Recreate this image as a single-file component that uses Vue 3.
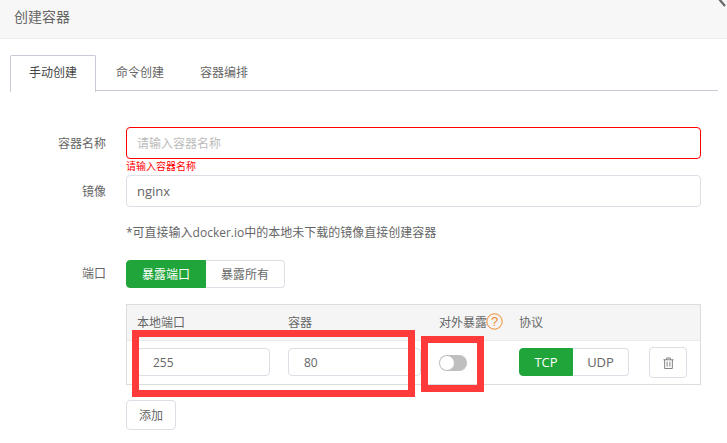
<script setup>
const tabs = ['手动创建', '命令创建', '容器编排']
const columns = ['本地端口', '容器', '对外暴露', '协议']
</script>

<template>
  <div class="page">
    <header class="head">
      <span>创建容器</span>
      <svg class="close" width="9" height="7" viewBox="0 0 9 7"><path d="M1 -1 L7 6" stroke="#666" stroke-width="2.2" fill="none" /></svg>
    </header>

    <nav class="tabs">
      <a v-for="(t, i) in tabs" :key="t" class="tab" :class="{ active: i === 0 }">{{ t }}</a>
    </nav>

    <form class="form" @submit.prevent>
      <div class="row">
        <label class="label">容器名称</label>
        <div class="field">
          <input class="input error" placeholder="请输入容器名称" />
          <div class="err">请输入容器名称</div>
        </div>
      </div>
      <div class="row">
        <label class="label">镜像</label>
        <div class="field"><input class="input" value="nginx" /></div>
      </div>
      <p class="hint">*可直接输入docker.io中的本地未下载的镜像直接创建容器</p>
      <div class="row port">
        <label class="label">端口</label>
        <div class="field">
          <div class="seg">
            <span class="seg-btn on">暴露端口</span>
            <span class="seg-btn wide">暴露所有</span>
          </div>
        </div>
      </div>

      <div class="table">
        <div class="grid thead">
          <span v-for="(c, i) in columns" :key="c" class="th">
            {{ c }}
            <svg v-if="i === 2" class="help" width="17" height="17" viewBox="0 0 17 17">
              <circle cx="8.5" cy="8.5" r="7.7" fill="none" stroke="#f0882b" stroke-width="1" />
              <text x="8.5" y="13" text-anchor="middle" font-size="13" fill="#f0882b" font-family="'Liberation Sans', sans-serif">?</text>
            </svg>
          </span>
        </div>
        <div class="grid tbody">
          <input class="cell-input" value="255" />
          <input class="cell-input" value="80" />
          <span class="switch"><i></i></span>
          <div class="seg proto">
            <span class="seg-btn on tcp">TCP</span>
            <span class="seg-btn udp">UDP</span>
          </div>
          <button type="button" class="del" aria-label="删除">
            <svg width="11" height="12" viewBox="0 0 12 13" fill="none" stroke="#777" stroke-width="1">
              <path d="M0.5 3 H11.5 M4 3 V1 H8 V3 M1.8 3 V12.5 H10.2 V3" />
              <path d="M4.5 5 V10.5 M7.5 5 V10.5" />
            </svg>
          </button>
        </div>
      </div>

      <button type="button" class="add">添加</button>
    </form>

    <div class="mark mark-a"></div>
    <div class="mark mark-b"></div>
  </div>
</template>

<style>
html, body { margin: 0; background: #fff; }
</style>

<style scoped>
.page {
  position: relative;
  width: 727px;
  height: 443px;
  overflow: hidden;
  background: #fff;
  color: #666;
  font-family: "Open Sans", "Noto Sans CJK SC", sans-serif;
  font-size: 12px;
}
.head {
  position: relative;
  height: 38px;
  line-height: 34px;
  padding-left: 14px;
  background: #f7f7f7;
  border-bottom: 1px solid #eee;
  font-size: 14px;
  color: #666;
}
.close { position: absolute; top: 0; right: 0; }
.tabs {
  display: flex;
  width: 708px;
  height: 35px;
  margin: 16px 0 0 10px;
  border-bottom: 1px solid #ccc9d6;
}
.tab {
  padding: 0 18px;
  height: 35px;
  line-height: 36px;
  color: #666;
}
.tab:nth-child(2) { margin-left: 2px; }
.tab.active {
  height: 36px;
  background: #fff;
  color: #444;
  border: 1px solid #ccc9d6;
  border-bottom: 0;
  border-radius: 2px 2px 0 0;
  line-height: 34px;
}
.form { margin-top: 36px; }
.row { display: flex; gap: 20px; }
.label {
  width: 106px;
  height: 32px;
  line-height: 33px;
  text-align: right;
  color: #666;
}
.field { width: 575px; }
.input {
  display: block;
  box-sizing: border-box;
  width: 100%;
  height: 32px;
  padding: 0 10px;
  border: 1px solid #dcdfe6;
  border-radius: 4px;
  outline: none;
  font: inherit;
  font-size: 13px;
  color: #666;
}
.input.error { border-color: #f00; font-size: 12px; }
.input::placeholder { color: #bbb; }
.err {
  height: 16px;
  line-height: 15px;
  font-size: 10px;
  color: #f00;
}
.hint {
  margin: 16px 0 17px 126px;
  line-height: 20px;
  color: #666;
}
.port .label { height: 28px; line-height: 28px; }
.seg { display: flex; height: 28px; }
.seg-btn {
  box-sizing: border-box;
  width: 80px;
  line-height: 27px;
  text-align: center;
  border: 1px solid #dcdfe6;
  border-left: 0;
  border-radius: 0 4px 4px 0;
  background: #fff;
  color: #666;
}
.seg-btn.wide { width: 79px; }
.seg-btn.on {
  background: #20a53a;
  border: 1px solid #20a53a;
  border-radius: 4px 0 0 4px;
  color: #fff;
}
.table {
  box-sizing: border-box;
  width: 575px;
  height: 81px;
  margin: 16px 0 15px 126px;
  border: 1px solid #ddd;
}
.grid {
  display: grid;
  grid-template-columns: 133px 133px 62px 112px 38px;
  column-gap: 18px;
  padding-left: 10px;
}
.thead {
  height: 35px;
  background: #f5f5f5;
  border-bottom: 1px solid #eaeaf0;
  line-height: 36px;
}
.th { position: relative; white-space: nowrap; }
.help { position: absolute; top: 8px; left: 47px; }
.tbody { padding-top: 7px; align-items: start; }
.cell-input {
  box-sizing: border-box;
  width: 133px;
  height: 28px;
  padding: 0 15px;
  border: 1px solid #dcdfe6;
  border-radius: 4px;
  outline: none;
  font: inherit;
  color: #666;
}
.switch {
  display: block;
  position: relative;
  width: 28px;
  height: 16px;
  margin-top: 7px;
  border-radius: 8px;
  background: #bfbfbf;
}
.switch i {
  position: absolute;
  top: 1px;
  left: 1px;
  width: 14px;
  height: 14px;
  border-radius: 50%;
  background: #fff;
}
.proto .tcp { width: 54px; font-size: 13px; }
.proto .udp { width: 56px; font-size: 13px; }
.del {
  box-sizing: border-box;
  display: flex;
  align-items: center;
  justify-content: center;
  width: 38px;
  height: 31px;
  margin-top: -1px;
  padding: 0;
  background: #fff;
  border: 1px solid #dcdfe6;
  border-radius: 4px;
}
.add {
  display: block;
  box-sizing: border-box;
  width: 50px;
  height: 30px;
  margin-left: 126px;
  padding: 0;
  background: #fff;
  border: 1px solid #dcdfe6;
  border-radius: 4px;
  font: inherit;
  color: #666;
}
.mark {
  position: absolute;
  box-sizing: border-box;
  border: 7px solid #ff3a3a;
  pointer-events: none;
}
.mark-a { left: 132px; top: 330px; width: 283px; height: 67px; }
.mark-b { left: 421px; top: 336px; width: 63px; height: 56px; }
</style>
